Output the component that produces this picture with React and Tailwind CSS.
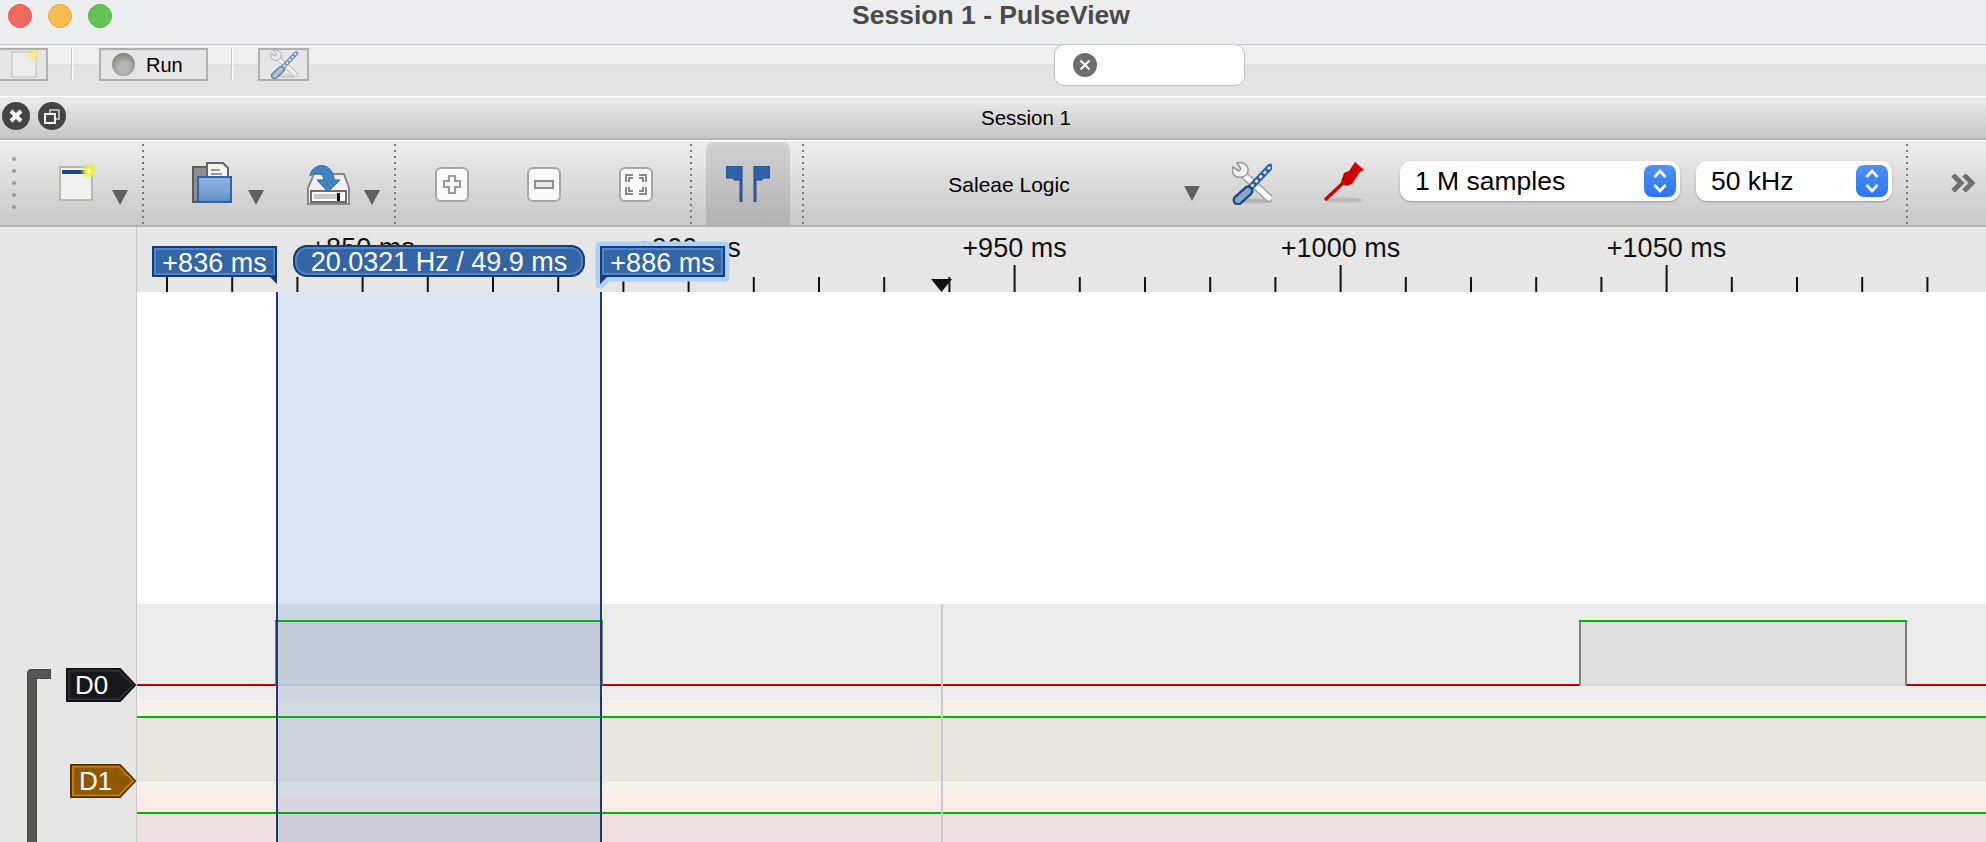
const rulerLabels = [
  { text: "+850 ms", x: 362.5 - 137 },
  { text: "+900 ms", x: 688.5 - 137 },
  { text: "+950 ms", x: 1014.5 - 137 },
  { text: "+1000 ms", x: 1340.5 - 137 },
  { text: "+1050 ms", x: 1666.5 - 137 },
];

// ticks sit every 10 ms, 65.2px apart, x is page space
const ticks = Array.from({ length: 28 }, (_, i) => ({
  x: 167 + i * 65.2 - 137,
  major: (i - 3) % 5 === 0,
}));

const Separator = ({ className = "" }) => (
  <div
    className={`w-[2px] h-[80px] mt-[3px] bg-[repeating-linear-gradient(to_bottom,#777_0,#777_2px,transparent_2px,transparent_6px)] ${className}`}
  />
);

const MenuArrow = ({ className = "" }) => (
  <svg width="16" height="15" viewBox="0 0 16 15" className={`shrink-0 mt-[49px] ${className}`}>
    <polygon points="0,0 16,0 8,15" fill="#606060" />
  </svg>
);

const NewIcon = ({ className = "", width = 34, height = 35, bar = true }) => (
  <svg width={width} height={height} viewBox="0 0 34 35" className={`shrink-0 overflow-visible ${className}`}>
    <defs>
      <radialGradient id="glow">
        <stop offset="0" stopColor="#fffde0" />
        <stop offset="0.35" stopColor="#f5ee3a" />
        <stop offset="1" stopColor="#f5ee3a" stopOpacity="0" />
      </radialGradient>
    </defs>
    <rect x="1" y="1" width="32" height="33" fill="#f1f1f1" stroke="#b9b9b2" strokeWidth="2" />
    {bar && <rect x="3" y="4" width="26" height="4" fill="#204a87" />}
    <circle cx="30" cy="5" r="9" fill="url(#glow)" />
  </svg>
);

const OpenIcon = ({ className = "" }) => (
  <svg width="40" height="41" viewBox="0 0 40 41" className={`shrink-0 ${className}`}>
    <defs>
      <linearGradient id="folderFront" x1="0" y1="0" x2="0" y2="1">
        <stop offset="0" stopColor="#8fb3e0" />
        <stop offset="0.55" stopColor="#7ba3d6" />
        <stop offset="1" stopColor="#5a8ac6" />
      </linearGradient>
    </defs>
    <rect x="1" y="5" width="20" height="35" fill="#8f8f8f" stroke="#5c5c5c" strokeWidth="2" />
    <path d="M15 1 H31 L36 6 V20 H15 Z" fill="#f4f4f4" stroke="#666" strokeWidth="2" />
    <path d="M19 8 H28 M19 12 H30" stroke="#9a9a9a" strokeWidth="2" />
    <rect x="6" y="15" width="33" height="25" fill="url(#folderFront)" stroke="#2f62a8" strokeWidth="2" />
  </svg>
);

const SaveIcon = ({ className = "" }) => (
  <svg width="43" height="43" viewBox="0 0 43 43" className={`shrink-0 ${className}`}>
    <path d="M7 12 H37 L42 26 V42 H1 V26 Z" fill="#f0f0f0" stroke="#8a8a8a" strokeWidth="2" />
    <rect x="4" y="29" width="35" height="11" fill="#fafafa" stroke="#6d6d6d" strokeWidth="2" />
    <rect x="7" y="32" width="24" height="5" fill="#c9c9c9" />
    <rect x="30" y="31" width="3" height="8" fill="#111" />
    <path d="M3 14 C4 3 22 -3 27 15 V18 H33 L21 30 L10 18 H17 C16 11 10 9 3 14 Z" fill="#3f83c0" stroke="#2f6aa0" strokeWidth="1" />
  </svg>
);

const ZoomButton = ({ children, className = "" }) => (
  <svg width="34" height="36" viewBox="0 0 34 36" className={`shrink-0 mt-[26px] ${className}`}>
    <rect x="1" y="2" width="32" height="32" rx="5" fill="#8a8a8a" opacity="0.35" />
    <rect x="1" y="1" width="32" height="33" rx="5" fill="#fafafa" stroke="#a6a6a6" strokeWidth="2" />
    {children}
  </svg>
);

const CursorIcon = ({ className = "" }) => (
  <svg width="44" height="36" viewBox="0 0 44 36" className={className}>
    <path d="M0 0 H16 V36 H14 V14 H8 V12 H0 Z" fill="#2f62a8" stroke="#204a87" strokeWidth="1" />
    <path d="M44 0 H28 V36 H30 V14 H36 V12 H44 Z" fill="#2f62a8" stroke="#204a87" strokeWidth="1" />
  </svg>
);

const ToolsIcon = ({ className = "", width = 40, height = 43 }) => (
  <svg width={width} height={height} viewBox="0 0 40 43" className={`shrink-0 ${className}`}>
    <ellipse cx="24" cy="39" rx="14" ry="2.5" fill="#a8a8a8" opacity="0.7" />
    <path d="M12 13 L37 36" stroke="#9a9a9a" strokeWidth="8" strokeLinecap="round" />
    <path d="M12 13 L37 36" stroke="#f6f6f6" strokeWidth="5.5" strokeLinecap="round" />
    <path d="M5 1 L9 7 L7 9 L1 5 C-1 11 3 17 10 15 C16 14 18 7 14 3 C12 1 8 0 5 1 Z" fill="#f0f0f0" stroke="#9a9a9a" strokeWidth="1.6" />
    <path d="M38 5 L18 26" stroke="#2f62a8" strokeWidth="6.5" strokeLinecap="round" />
    <path d="M38 5 L18 26" stroke="#ffffff" strokeWidth="2.5" strokeDasharray="3 3" />
    <path d="M16 29 L6 38" stroke="#204a87" strokeWidth="11" strokeLinecap="round" />
    <path d="M16 29 L6 38" stroke="#8aa8cc" strokeWidth="6" strokeLinecap="round" />
  </svg>
);

const ProbeIcon = ({ className = "" }) => (
  <svg width="40" height="41" viewBox="0 0 40 41" className={`shrink-0 ${className}`}>
    <ellipse cx="20" cy="38" rx="19" ry="2.5" fill="#b0b0b0" opacity="0.7" />
    <path d="M1 38 L19 21" stroke="#cc0000" strokeWidth="3.5" />
    <path d="M31 0 L40 8 L36 10 L32 16 L28 22 L22 24 L17 20 L20 11 L25 9 Z" fill="#cc0000" />
  </svg>
);

const SelectBox = ({ label, className = "" }) => (
  <div
    className={`h-[40px] mt-[20px] shrink-0 rounded-[11px] bg-white shadow-[0_1px_2px_rgba(0,0,0,0.3)] flex items-center pl-[15px] pr-[4px] text-[26.5px] text-black ${className}`}
  >
    <span className="flex-1 whitespace-nowrap leading-none">{label}</span>
    <div className="w-[32px] h-[32px] rounded-[8px] bg-gradient-to-b from-[#4f93f8] to-[#2a74f0] flex items-center justify-center">
      <svg width="16" height="26" viewBox="0 0 16 26" fill="none" stroke="#fff" strokeWidth="2.6">
        <path d="M2.5 9 L8 3 L13.5 9" />
        <path d="M2.5 17 L8 23 L13.5 17" />
      </svg>
    </div>
  </div>
);

const SignalLabel = ({ name, width, points, fill, inner, outer }) => (
  <div className="relative h-[34px] flex items-center" style={{ width }}>
    <svg width={width} height="34" viewBox={`0 0 ${width} 34`} className="absolute inset-0">
      <polygon points={points} fill={fill} stroke={outer} strokeWidth="2" strokeLinejoin="round" />
      <polygon points={points} fill="none" stroke={inner} strokeWidth="2" transform={`translate(${width * 0.03} 1.7) scale(0.94 0.9)`} />
    </svg>
    <span className="relative pl-[9px] text-[26px] leading-none text-white">{name}</span>
  </div>
);

const CursorFlag = ({ text, points, innerPoints, left, halo = false }) => (
  <div className="absolute top-[19px] w-[125px] h-[38px] flex items-start justify-center" style={{ left }}>
    <svg width="125" height="38" viewBox="0 0 125 38" className="absolute inset-0 overflow-visible">
      {halo && <polygon points={points} fill="none" stroke="#a9d1fb" strokeWidth="9" strokeLinejoin="round" />}
      <polygon points={points} fill="#1f3a63" />
      <polygon points={innerPoints} fill="#3465a4" stroke="#4a86d8" strokeWidth="2" />
    </svg>
    <span className="relative h-[33px] leading-[34px] text-[27px] text-white whitespace-nowrap">{text}</span>
  </div>
);

export default function App() {
  return (
    <div className="w-[1986px] h-[842px] overflow-hidden bg-[#e6e6e6] font-['Liberation_Sans',Arial,sans-serif]">
      {/* window title */}
      <div className="h-[45px] bg-[#ecedef] border-b border-[#c9c9c9] flex items-center relative">
        <div className="flex items-center gap-[16px] pl-[8px] -mt-[12px]">
          <div className="w-[24px] h-[24px] rounded-full bg-[#ef6a5f] border border-[#e0584e]" />
          <div className="w-[24px] h-[24px] rounded-full bg-[#f7bd4f] border border-[#e5a73d]" />
          <div className="w-[24px] h-[24px] rounded-full bg-[#61c454] border border-[#52b045]" />
        </div>
        <div className="absolute left-[852px] w-[278px] text-center top-[1px] text-[26.5px] leading-[28px] font-bold text-[#4a4a4a] whitespace-nowrap">
          Session 1 - PulseView
        </div>
      </div>

      {/* top toolbar */}
      <div className="h-[52px] flex items-start border-b border-white bg-[linear-gradient(#efefef_0,#efefef_19px,#dcdcdc_19px,#dcdcdc_20px,#e3e3e3_20px)]">
        <div className="w-[50px] h-[33px] mt-[3px] -ml-[2px] shrink-0 border-2 border-[#b0b0b0] bg-[#e6e6e6] flex items-center justify-end pr-[9px]">
          <NewIcon width={26} height={27} bar={false} className="opacity-60" />
        </div>
        <div className="w-[2px] h-[33px] mt-[3px] ml-[23px] shrink-0 bg-[#c8c8c8] border-r border-white" />
        <div className="w-[109px] h-[33px] mt-[3px] ml-[26px] shrink-0 border-2 border-[#b0b0b0] bg-[#e6e6e6] flex items-center pl-[11px] text-[20px] text-black">
          <div className="w-[23px] h-[23px] rounded-full bg-[radial-gradient(circle_at_50%_65%,#b8b8b2_25%,#6f6f68_100%)]" />
          <span className="ml-[11px] leading-none">Run</span>
        </div>
        <div className="w-[2px] h-[33px] mt-[3px] ml-[23px] shrink-0 bg-[#c8c8c8] border-r border-white" />
        <div className="w-[51px] h-[33px] mt-[3px] ml-[25px] shrink-0 border-2 border-[#b0b0b0] bg-[#e6e6e6] flex items-center justify-center">
          <ToolsIcon width={30} height={29} className="opacity-60" />
        </div>
        <div className="w-[191px] h-[42px] -mt-[1px] ml-[745px] shrink-0 rounded-[10px] bg-white border border-[#bdbdbd] flex items-center pl-[18px]">
          <svg width="24" height="24" viewBox="0 0 24 24">
            <circle cx="12" cy="12" r="12" fill="#6e6e6e" />
            <path d="M7.5 7.5 L16.5 16.5 M16.5 7.5 L7.5 16.5" stroke="#fff" strokeWidth="2" />
          </svg>
        </div>
      </div>

      {/* dock title */}
      <div className="h-[43px] border-b-2 border-[#b2b2b2] bg-gradient-to-b from-[#ededed] to-[#c6c6c6] flex items-center relative">
        <div className="flex items-center gap-[8px] pl-[2px] -mt-[3px]">
          <svg width="28" height="28" viewBox="0 0 28 28">
            <circle cx="14" cy="14" r="14" fill="#444" />
            <path d="M9 9 L19 19 M19 9 L9 19" stroke="#fff" strokeWidth="4" />
          </svg>
          <svg width="28" height="28" viewBox="0 0 28 28">
            <circle cx="14" cy="14" r="14" fill="#444" />
            <rect x="12" y="8" width="9" height="9" fill="none" stroke="#ccc" strokeWidth="1.6" />
            <rect x="7" y="12" width="10" height="9" fill="#444" stroke="#fff" strokeWidth="2" />
          </svg>
        </div>
        <span className="absolute left-[976px] top-[11px] w-[100px] text-center text-[20.5px] leading-none text-black whitespace-nowrap">Session 1</span>
      </div>

      {/* main toolbar */}
      <div className="h-[87px] flex items-start border-t border-white border-b-2 border-b-[#b2b2b2] bg-gradient-to-b from-[#eeeeee] to-[#c8c8c8]">
        <div className="ml-[12px] mt-[16px] w-[4px] shrink-0 flex flex-col gap-[8px]">
          <div className="w-[4px] h-[4px] rounded-full bg-[#999]" />
          <div className="w-[4px] h-[4px] rounded-full bg-[#999]" />
          <div className="w-[4px] h-[4px] rounded-full bg-[#999]" />
          <div className="w-[4px] h-[4px] rounded-full bg-[#999]" />
          <div className="w-[4px] h-[4px] rounded-full bg-[#999]" />
        </div>
        <NewIcon className="ml-[43px] mt-[25px]" />
        <MenuArrow className="ml-[19px]" />
        <Separator className="ml-[14px]" />
        <OpenIcon className="ml-[48px] mt-[21px]" />
        <MenuArrow className="ml-[16px]" />
        <SaveIcon className="ml-[43px] mt-[21px]" />
        <MenuArrow className="ml-[14px]" />
        <Separator className="ml-[14px]" />
        <ZoomButton className="ml-[39px]">
          <path d="M14 9 H20 V14 H25 V20 H20 V26 H14 V20 H9 V14 H14 Z" fill="#f6f6f6" stroke="#9a9a9a" strokeWidth="2" />
        </ZoomButton>
        <ZoomButton className="ml-[58px]">
          <rect x="8" y="14" width="18" height="7" fill="#e6e6e6" stroke="#8f8f8f" strokeWidth="2" />
        </ZoomButton>
        <ZoomButton className="ml-[58px]">
          <path d="M14 8 H7 V15 M10 15 V11 H14 M20 8 H27 V15 M24 15 V11 H20 M14 27 H7 V20 M10 20 V24 H14 M20 27 H27 V20 M24 20 V24 H20" fill="none" stroke="#8a8a8a" strokeWidth="2" />
        </ZoomButton>
        <Separator className="ml-[37px]" />
        <div className="ml-[14px] mt-[1px] w-[84px] h-[84px] shrink-0 rounded-t-[8px] bg-gradient-to-b from-[#d2d2d2] to-[#b1b1b1] flex justify-center pt-[24px]">
          <CursorIcon />
        </div>
        <Separator className="ml-[12px]" />
        <div className="ml-[140px] w-[130px] mt-[34px] shrink-0 text-center text-[21px] leading-[20px] text-black whitespace-nowrap">Saleae Logic</div>
        <MenuArrow className="ml-[110px] !mt-[45px]" />
        <ToolsIcon className="ml-[32px] mt-[21px]" />
        <ProbeIcon className="ml-[52px] mt-[21px]" />
        <SelectBox label="1 M samples" className="ml-[36px] w-[280px]" />
        <SelectBox label="50 kHz" className="ml-[16px] w-[196px]" />
        <Separator className="ml-[14px]" />
        <svg width="26" height="18" viewBox="0 0 26 18" className="ml-[43px] mt-[33px] shrink-0">
          <path d="M2 1 L10 9 L2 17 M13 1 L21 9 L13 17" fill="none" stroke="#707070" strokeWidth="5" />
        </svg>
      </div>

      <div className="flex h-[615px]">
        {/* signal headers */}
        <div className="w-[137px] shrink-0 relative border-r border-[#c8c8c8] bg-[#e6e6e6]">
          <div className="h-[377px]" />
          <div className="h-[96px] pt-[64px] flex justify-end">
            <SignalLabel name="D0" width={70} points="1,1 54,1 69,17 54,33 1,33" fill="#16191a" inner="#2e3436" outer="#0d0f10" />
          </div>
          <div className="h-[96px] pt-[64px] flex justify-end">
            <SignalLabel name="D1" width={66} points="1,1 50,1 65,17 50,33 1,33" fill="#8f5902" inner="#ce7c00" outer="#4f3100" />
          </div>
          <div className="absolute left-[27px] top-[442px] bottom-0 w-[24px]">
            <div className="w-[24px] h-[10px] rounded-tl-[4px] bg-[#555753] border border-[#444]" />
            <div className="w-[10px] h-full bg-[#555753] border-x border-[#444]" />
          </div>
        </div>

        <div className="flex-1 relative overflow-hidden">
          {/* ruler */}
          <div className="h-[65px] relative bg-[#e6e6e6]">
            {rulerLabels.map((label) => (
              <span
                key={label.text}
                className="absolute top-[7px] -translate-x-1/2 text-[27px] leading-[28px] text-[#111] whitespace-nowrap"
                style={{ left: label.x }}
              >
                {label.text}
              </span>
            ))}
            <svg width="1849" height="65" className="absolute inset-0">
              {ticks.map((tick) => (
                <line key={tick.x} x1={tick.x} x2={tick.x} y1={tick.major ? 38 : 50} y2="65" stroke="#111" strokeWidth="2" />
              ))}
              <polygon points="794,52 815,52 804.5,65" fill="#111" />
            </svg>
            <CursorFlag text="+836 ms" left={15} points="0,0 125,0 125,38 118,31 0,31" innerPoints="3,3 122,3 122,28 3,28" />
            <div className="absolute left-[156px] top-[18px] w-[292px] h-[32px] pt-[2px] rounded-[14px] border-2 border-[#1f3a63] bg-[#3465a4] shadow-[inset_0_0_0_2px_#4a86d8] flex items-center justify-center text-[27px] leading-none text-white whitespace-nowrap">
              20.0321 Hz / 49.9 ms
            </div>
            <CursorFlag text="+886 ms" left={463} halo points="0,0 125,0 125,31 7,31 0,38" innerPoints="3,3 122,3 122,28 3,28" />
          </div>

          {/* traces */}
          <div className="h-[312px] bg-white" />
          <div className="h-[96px] bg-[#ececec] relative">
            <svg width="1849" height="96" className="absolute inset-0">
              <rect x="139" y="18" width="326" height="63" fill="#e0e0e0" />
              <rect x="1443" y="18" width="326" height="63" fill="#e0e0e0" />
              <line x1="0" x2="1849" y1="81" y2="81" stroke="#d6d6d6" strokeWidth="2" />
              <path d="M0 81 H139 M465 81 H1443 M1769 81 H1849" stroke="#c00000" strokeWidth="2" />
              <path d="M139 81 V17 H465 V81 M1443 81 V17 H1769 V81" fill="none" stroke="#808080" strokeWidth="2" />
              <path d="M138 17 H466 M1442 17 H1770" stroke="#00b800" strokeWidth="2" />
            </svg>
          </div>
          <div className="h-[96px] bg-[#f5f0eb]">
            <div className="h-[16px]" />
            <div className="h-[65px] border-t-2 border-t-[#00b800] border-b border-b-[#dedcd6] bg-[#e9e6e0]" />
          </div>
          <div className="h-[16px] bg-[#fbebeb]" />
          <div className="h-[30px] border-t-2 border-t-[#00b800] bg-[#eedfe0]" />

          {/* trigger line and selected range */}
          <div className="absolute left-[804px] top-[377px] bottom-0 w-[2px] bg-[#c8c8c8]" />
          <div className="absolute left-[139px] top-[65px] bottom-0 w-[326px] border-x-2 border-[#1f3a63] bg-[rgba(60,115,185,0.18)]" />
        </div>
      </div>
    </div>
  );
}
